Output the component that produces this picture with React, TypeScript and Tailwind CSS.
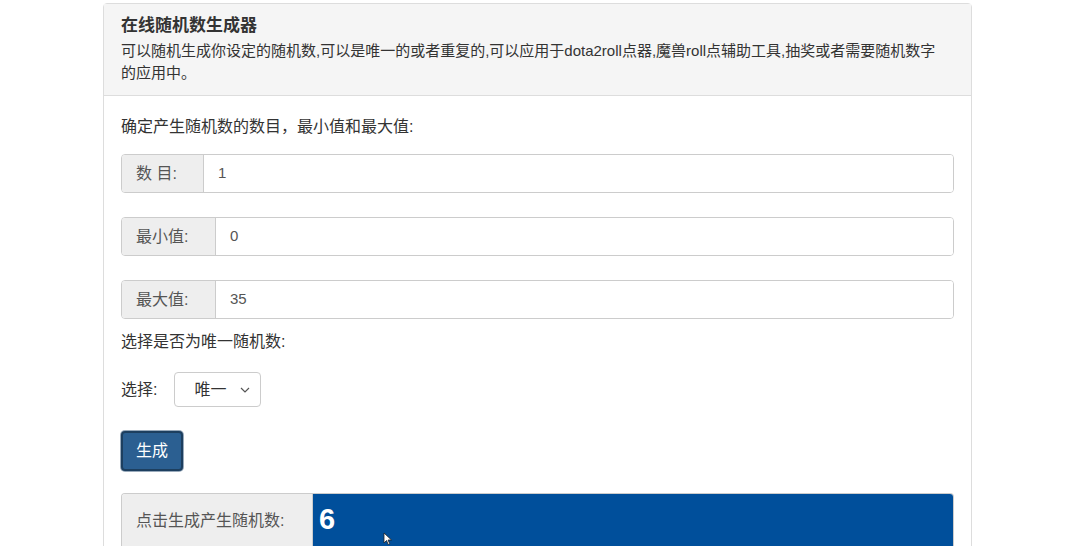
import React from 'react';

const font = { fontFamily: '"Liberation Sans", "Noto Sans CJK SC", sans-serif' };

function Field({ label, value, labelW }: { label: string; value: string; labelW: string }) {
  return (
    <div className="flex h-[39px] w-full rounded border border-[#cccccc] overflow-hidden">
      <div className={`${labelW} flex items-center pl-[14px] bg-[#eeeeee] border-r border-[#cccccc] text-[16px] text-[#555555]`}>
        {label}
      </div>
      <div className="flex-1 flex items-center px-[14px] bg-white text-[15px] text-[#555555]">{value}</div>
    </div>
  );
}

export default function App() {
  return (
    <div className="w-[1080px] h-[546px] bg-white overflow-hidden text-[#333333]" style={font}>
      <div className="ml-[103px] mt-[3px] w-[869px] rounded border border-[#dddddd]">
        {/* 标题区 */}
        <div className="bg-[#f5f5f5] border-b border-[#dddddd] px-[17px] pt-[9px] pb-[11px]">
          <h1 className="text-[17px] font-bold leading-[26px] text-[#333333]">在线随机数生成器</h1>
          <p className="text-[15px] leading-[22px] mt-[1px] pr-[12px]">
            可以随机生成你设定的随机数,可以是唯一的或者重复的,可以应用于dota2roll点器,魔兽roll点辅助工具,抽奖或者需要随机数字的应用中。
          </p>
        </div>

        {/* 表单 */}
        <div className="px-[17px] pt-[20px]">
          <p className="text-[16px] leading-[22px]">确定产生随机数的数目，最小值和最大值:</p>
          <div className="mt-[16px]">
            <Field label="数 目:" value="1" labelW="w-[82px]" />
          </div>
          <div className="mt-[24px]">
            <Field label="最小值:" value="0" labelW="w-[94px]" />
          </div>
          <div className="mt-[24px]">
            <Field label="最大值:" value="35" labelW="w-[94px]" />
          </div>
          <p className="text-[16px] leading-[22px] mt-[12px]">选择是否为唯一随机数:</p>
          <div className="flex items-center mt-[19px] gap-[17px]">
            <span className="text-[16px]">选择:</span>
            <div className="w-[87px] h-[35px] rounded border border-[#cccccc] flex items-center justify-between pl-[19px] pr-[10px] text-[16px]">
              <span>唯一</span>
              <svg width="10" height="6" viewBox="0 0 10 6" fill="none" stroke="#555" strokeWidth="1.2">
                <path d="M1 1l4 4 4-4" />
              </svg>
            </div>
          </div>
          <button className="mt-[24px] h-[40px] w-[62px] rounded border-2 border-[#1d3f5f] bg-[#2b5f91] text-white text-[16px] shadow-[0_0_0_1px_#9ab]">
            生成
          </button>
          <div className="mt-[22px] flex h-[60px] rounded-t border border-[#cccccc] border-b-0 overflow-hidden">
            <div className="w-[191px] bg-[#eeeeee] border-r border-[#cccccc] flex items-center pl-[14px] text-[16px] text-[#555555] pb-[6px]">
              点击生成产生随机数:
            </div>
            <div className="flex-1 bg-[#004f9b] flex items-start pl-[6px] pt-[4px] relative">
              <span className="text-white font-bold text-[29px]" style={{ fontFamily: '"Liberation Sans", Arial, sans-serif' }}>6</span>
              <svg className="absolute left-[70px] top-[38px]" width="9" height="13" viewBox="0 0 9 13">
                <path d="M1 1v10l2.5-2.5 1.8 4 1.5-.7-1.8-3.8H8.5z" fill="#fff" stroke="#222" strokeWidth="0.8" />
              </svg>
            </div>
          </div>
        </div>
      </div>
    </div>
  );
}
